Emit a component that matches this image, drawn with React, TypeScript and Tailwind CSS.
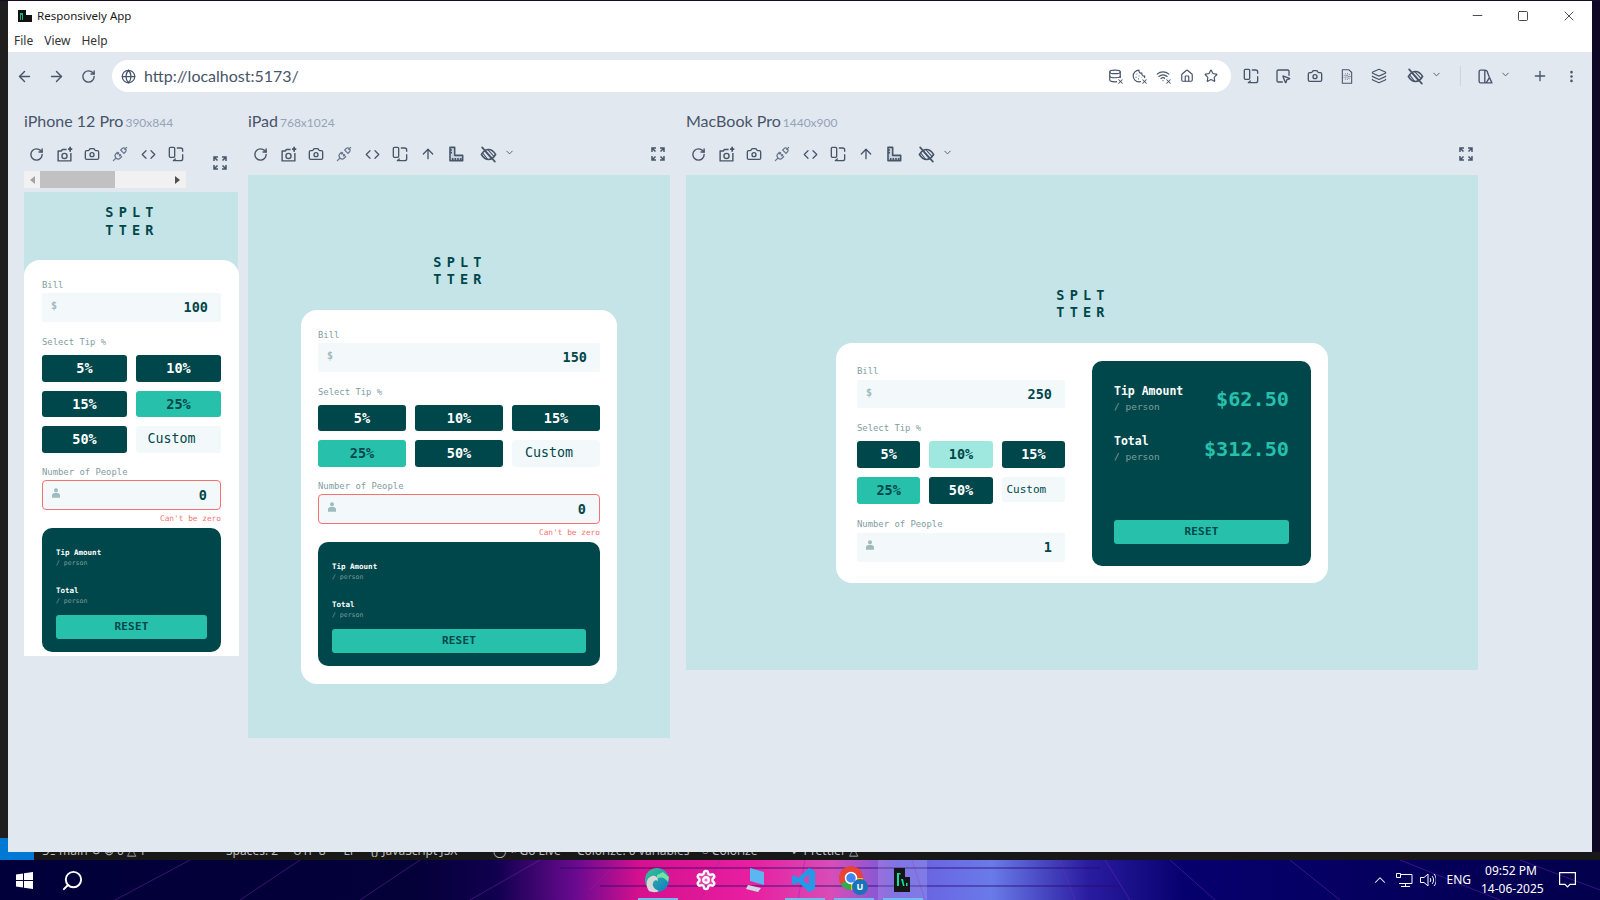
import { ArrowLeft, ArrowRight, RotateCw, Globe, Camera, Code, ArrowUp, House, Star, Plus, EllipsisVertical, ChevronDown, Layers, SquareMousePointer, Cookie, Wifi, Database, Search, Settings, Minus, Square, X, ChevronUp } from "lucide-react";
import type { ReactNode } from "react";

const mono = "font-['DejaVu_Sans_Mono',monospace]";

function XMark() {
  return (
    <span className="absolute -bottom-0.5 -right-0.5 bg-white leading-none">
      <X size={7} strokeWidth={3.5} color="#475569" />
    </span>
  );
}

function PhoneRotate({ size = 16 }: { size?: number }) {
  return (
    <svg width={size} height={size} viewBox="0 0 24 24" fill="none" stroke="#475569" strokeWidth="2" strokeLinecap="round" strokeLinejoin="round">
      <rect x="2" y="2" width="8" height="15" rx="1.5" />
      <path d="M14 3h5a3 3 0 0 1 3 3v2M22 13v6a3 3 0 0 1-3 3H8M11 19.5 8 22" />
    </svg>
  );
}

function CameraPlus() {
  return (
    <svg width="17" height="17" viewBox="0 0 24 24" fill="none" stroke="#475569" strokeWidth="2" strokeLinejoin="round">
      <path d="M15 5H9L7.5 7H3v14h18V10" />
      <circle cx="12" cy="14" r="3.6" />
      <path d="M20 1v7M17 4.5h6" strokeWidth="2.4" />
    </svg>
  );
}

function Plug() {
  return (
    <svg width="16" height="16" viewBox="0 0 24 24" fill="none" stroke="#64748b" strokeWidth="1.7" strokeLinecap="round">
      <path d="m2 22 4-4M22 2l-3 3M8 9.500l6.500 6.500-2 2a4.500 4.500 0 0 1-6.500-6.500zM13 6l5 5 2-2a3.500 3.500 0 0 0-5-5zM8 12l2-2M11 15l2-2" />
    </svg>
  );
}

function RulerL() {
  return (
    <svg width="16" height="16" viewBox="0 0 24 24" fill="#cbd5e1" stroke="#475569" strokeWidth="2.400" strokeLinejoin="round">
      <path d="M3 2h7v12h12v8H3zM7 18v4M11 18v4M15 18v4M19 18v4M3 6h3M3 10h3" />
    </svg>
  );
}

function EyeHatch({ size = 18 }: { size?: number }) {
  return (
    <svg width={size} height={size} viewBox="0 0 24 24" fill="none" stroke="#475569" strokeWidth="2.200" strokeLinecap="round">
      <path d="M2 12c3-5 6.500-7 10-7s7 2 10 7c-3 5-6.500 7-10 7s-7-2-10-7z" />
      <path d="m7 7 9 11M4 10l7 9M11 5l9 10" strokeWidth="1.500" />
      <path d="M3 2l18 20" strokeWidth="2.400" />
    </svg>
  );
}

function Expand() {
  return (
    <svg width="14" height="14" viewBox="0 0 14 14" fill="none" stroke="#475569" strokeWidth="1.500">
      <path d="M1 5V1h4M1 1l3.500 3.500M13 5V1H9M13 1 9.500 4.500M1 9v4h4M1 13l3.500-3.500M13 9v4H9M13 13 9.500 9.500" />
    </svg>
  );
}

function PanelIcon() {
  return (
    <svg width="17" height="17" viewBox="0 0 24 24" fill="none" stroke="#475569" strokeWidth="1.900" strokeLinejoin="round">
      <path d="M11 3H5a2 2 0 0 0-2 2v14a2 2 0 0 0 2 2h16l-4-9-3-8zM11 3v18M13 21l5-8" />
    </svg>
  );
}

function FileDots() {
  return (
    <svg width="16" height="17" viewBox="0 0 24 24" fill="none" stroke="#475569" strokeWidth="1.600" strokeLinejoin="round">
      <path d="M5 2h10l4 4v16H5z" />
      <circle cx="12" cy="12" r="2" strokeDasharray="1 1.200" />
      <circle cx="12" cy="12" r="4.500" strokeDasharray="1 2" />
    </svg>
  );
}

function PersonIcon() {
  return (
    <svg width="8" height="10" viewBox="0 0 12 14" fill="#9ebbbd">
      <circle cx="6" cy="3" r="3" />
      <path d="M0 14v-3.500C0 8 2 6.500 6 6.500s6 1.500 6 4V14z" />
    </svg>
  );
}

function ToolBtn({ children, w = "w-7" }: { children: ReactNode; w?: string }) {
  return <div className={`flex h-[18px] shrink-0 items-center justify-center ${w}`}>{children}</div>;
}

function DeviceToolbar({ full }: { full: boolean }) {
  return (
    <div className="-ml-[2px] flex items-center">
      <ToolBtn><RotateCw size={15} color="#475569" strokeWidth={2.200} /></ToolBtn>
      <ToolBtn><CameraPlus /></ToolBtn>
      <ToolBtn><Camera size={16} color="#475569" strokeWidth={2} /></ToolBtn>
      <ToolBtn><Plug /></ToolBtn>
      <ToolBtn><Code size={15} color="#475569" strokeWidth={2} /></ToolBtn>
      <ToolBtn><PhoneRotate /></ToolBtn>
      {full && <ToolBtn><ArrowUp size={16} color="#475569" strokeWidth={2} /></ToolBtn>}
      {full && <ToolBtn><RulerL /></ToolBtn>}
      {full && (
        <div className="ml-[10px] flex items-center gap-[7px]">
          <EyeHatch size={17} />
          <ChevronDown size={11} color="#475569" strokeWidth={2} className="-mt-1" />
        </div>
      )}
    </div>
  );
}

function Title({ className }: { className: string }) {
  return (
    <div className={`${mono} text-center text-[13.500px] font-bold leading-[17.500px] tracking-[5.200px] text-[#00474b] ${className}`}>
      <div>SPLT</div>
      <div>TTER</div>
    </div>
  );
}

function Field({ value, error, h, person }: { value: string; error?: boolean; h: string; person?: boolean }) {
  return (
    <div className={`flex items-start justify-between rounded-[2px] bg-[#f3f9fa] pl-[9px] pr-[13px] ${h} ${error ? "rounded-[4px] border border-[#f87171]" : ""}`}>
      <div className={`pt-[7px] text-[10px] font-bold leading-[12px] text-[#9ebbbd] ${mono}`}>{person ? <PersonIcon /> : "$"}</div>
      <div className={`self-center text-[13.500px] font-bold text-[#00474b] ${mono}`}>{value}</div>
    </div>
  );
}

function Label({ children, className = "" }: { children: ReactNode; className?: string }) {
  return <div className={`${mono} h-3 text-[8.900px] leading-3 text-[#7f9d9f] ${className}`}>{children}</div>;
}

function TipBtn({ label, kind = "dark" }: { label: string; kind?: "dark" | "active" | "hover" }) {
  const tone = kind === "active" ? "bg-[#26c0ab] text-[#00474b]" : kind === "hover" ? "bg-[#9fe8df] text-[#00474b]" : "bg-[#00474b] text-white";
  return <div className={`flex h-[26.500px] items-center justify-center rounded-[3px] text-[13.500px] font-bold ${mono} ${tone}`}>{label}</div>;
}

function CustomBox({ small }: { small?: boolean }) {
  return (
    <div className={`flex items-center justify-center rounded-[3px] bg-[#f3f9fa] pr-[14px] text-[#00474b] ${mono} ${small ? "h-[25px] text-[11px]" : "h-[26.500px] text-[13.300px]"}`}>
      Custom
    </div>
  );
}

function Reset() {
  return (
    <div className={`flex h-6 items-center justify-center rounded-[3px] bg-[#26c0ab] text-[11px] font-bold tracking-[0.200px] text-[#00474b] ${mono}`}>
      RESET
    </div>
  );
}

function SmallResult() {
  return (
    <div className="mt-[3px] h-[124px] rounded-[10px] bg-[#00474b] px-[14px] pt-[19.500px]">
      <div className={`${mono} text-[7.500px] font-bold leading-[10px] text-white`}>Tip Amount</div>
      <div className={`${mono} mt-[1px] text-[6.500px] leading-[9px] text-[#7f9d9f]`}>/ person</div>
      <div className={`${mono} mt-[18.500px] text-[7.500px] font-bold leading-[10px] text-white`}>Total</div>
      <div className={`${mono} mt-[1px] text-[6.500px] leading-[9px] text-[#7f9d9f]`}>/ person</div>
      <div className="mt-[9px]"><Reset /></div>
    </div>
  );
}

function PeopleError({ value }: { value: string }) {
  return (
    <>
      <Label className="mt-[13.500px] mb-[2px]">Number of People</Label>
      <Field value={value} error person h="h-[30px]" />
      <div className={`${mono} mt-[3px] h-3 text-right text-[7.800px] leading-3 text-[#f87171]`}>Can't be zero</div>
    </>
  );
}

function PhoneBody() {
  return (
    <div className="flex h-[464px] w-[214px] flex-col bg-[#c5e4e7]">
      <div className="h-[68px] pt-[12px]"><Title className="pl-[2px]" /></div>
      <div className="-mr-px flex-1 rounded-t-[16px] bg-white pl-[18px] pr-[18px] pt-[19px]">
        <Label className="mb-[2px]">Bill</Label>
        <Field value="100" h="h-[29px]" />
        <Label className="mt-[14px] mb-[7px]">Select Tip %</Label>
        <div className="grid grid-cols-2 gap-x-[9px] gap-y-[9px]">
          <TipBtn label="5%" />
          <TipBtn label="10%" />
          <TipBtn label="15%" />
          <TipBtn label="25%" kind="active" />
          <TipBtn label="50%" />
          <CustomBox />
        </div>
        <PeopleError value="0" />
        <SmallResult />
      </div>
    </div>
  );
}

function TabletBody() {
  return (
    <div className="flex h-[563px] w-[422px] flex-col items-center justify-center bg-[#c5e4e7] pt-[24px]">
      <Title className="mb-[21px] pl-[2px]" />
      <div className="h-[374px] w-[316px] rounded-[16px] bg-white px-[17px] pt-[19px]">
        <Label className="mb-[2px]">Bill</Label>
        <Field value="150" h="h-[29px]" />
        <Label className="mt-[14px] mb-[7px]">Select Tip %</Label>
        <div className="grid grid-cols-3 gap-x-[9px] gap-y-[9px]">
          <TipBtn label="5%" />
          <TipBtn label="10%" />
          <TipBtn label="15%" />
          <TipBtn label="25%" kind="active" />
          <TipBtn label="50%" />
          <CustomBox />
        </div>
        <PeopleError value="0" />
        <SmallResult />
      </div>
    </div>
  );
}

function DesktopBody() {
  return (
    <div className="flex h-[495px] w-[792px] flex-col items-center justify-center bg-[#c5e4e7] pt-[24px]">
      <Title className="mb-[21px] pl-[2px]" />
      <div className="flex h-[240px] w-[492px] items-center justify-between rounded-[16px] bg-white pl-[21px] pr-[17px] pt-[2px]">
        <div className="w-[208px]">
          <Label className="mb-[3px]">Bill</Label>
          <Field value="250" h="h-[28px]" />
          <Label className="mt-[14px] mb-[7px]">Select Tip %</Label>
          <div className="grid grid-cols-3 items-start gap-x-[9px] gap-y-[9.500px]">
            <TipBtn label="5%" />
            <TipBtn label="10%" kind="hover" />
            <TipBtn label="15%" />
            <TipBtn label="25%" kind="active" />
            <TipBtn label="50%" />
            <CustomBox small />
          </div>
          <Label className="mt-[14px] mb-[3px]">Number of People</Label>
          <Field value="1" person h="h-[29px]" />
        </div>
        <div className="flex h-[205px] w-[219px] flex-col rounded-[10px] bg-[#00474b] px-[22px] pb-[22px] pt-[20px]">
          <Amount title="Tip Amount" value="$62.50" />
          <div className="mt-[14px]"><Amount title="Total" value="$312.50" /></div>
          <div className="mt-auto"><Reset /></div>
        </div>
      </div>
    </div>
  );
}

function Amount({ title, value }: { title: string; value: string }) {
  return (
    <div className="flex h-[36px] items-center justify-between">
      <div>
        <div className={`${mono} text-[11.500px] font-bold leading-[16px] text-white`}>{title}</div>
        <div className={`${mono} text-[9.500px] leading-[16px] text-[#7f9d9f]`}>/ person</div>
      </div>
      <div className={`${mono} text-[20.200px] font-bold text-[#26c0ab]`}>{value}</div>
    </div>
  );
}

function DeviceHead({ name, dims }: { name: string; dims: string }) {
  return (
    <div className="flex h-[18px] items-baseline gap-[2px] font-['Lato',sans-serif] leading-[18px]">
      <span className="text-[16px] text-[#475569]">{name}</span>
      <span className="text-[12px] text-[#94a3b8]">{dims}</span>
    </div>
  );
}

function Preview() {
  return (
    <div className="flex min-h-0 flex-1 gap-[10px] pl-4 pt-[12px]">
      <div className="w-[214px] shrink-0">
        <DeviceHead name="iPhone 12 Pro" dims="390x844" />
        <div className="mt-[15px] flex items-start">
          <DeviceToolbar full={false} />
          <div className="ml-[23px] mt-[11px]"><Expand /></div>
        </div>
        <div className="mt-px flex h-[17px] w-[162px] items-center justify-between bg-[#f1f1f1] px-[6px]">
          <span className="h-0 w-0 border-y-[4px] border-r-[5px] border-y-transparent border-r-[#a3a3a3]" />
          <span className="ml-[5px] mr-auto h-[17px] w-[75px] bg-[#c1c1c1]" />
          <span className="h-0 w-0 border-y-[4px] border-l-[5px] border-y-transparent border-l-[#505050]" />
        </div>
        <div className="mt-[4px]"><PhoneBody /></div>
      </div>
      <div className="w-[422px] shrink-0">
        <DeviceHead name="iPad" dims="768x1024" />
        <div className="mt-[15px] flex items-center justify-between pr-[5px]">
          <DeviceToolbar full />
          <Expand />
        </div>
        <div className="mt-[12px]"><TabletBody /></div>
      </div>
      <div className="ml-[6px] w-[792px] shrink-0">
        <DeviceHead name="MacBook Pro" dims="1440x900" />
        <div className="mt-[15px] flex items-center justify-between pr-[5px]">
          <DeviceToolbar full />
          <Expand />
        </div>
        <div className="mt-[12px]"><DesktopBody /></div>
      </div>
    </div>
  );
}

function AddressBar() {
  const s = "#475569";
  return (
    <div className="flex h-[48px] shrink-0 items-center">
      <ToolBtn w="w-8"><ArrowLeft size={17} color={s} strokeWidth={2} /></ToolBtn>
      <ToolBtn w="w-8"><ArrowRight size={17} color={s} strokeWidth={2} /></ToolBtn>
      <ToolBtn w="w-8"><RotateCw size={15} color={s} strokeWidth={2.200} /></ToolBtn>
      <div className="ml-2 flex h-8 w-[1119px] items-center rounded-full bg-white pl-[9px] pr-[13px]">
        <Globe size={15} color={s} strokeWidth={2} />
        <span className="ml-[8px] font-['Lato',sans-serif] text-[16px] text-[#475569]">http://localhost:5173/</span>
        <div className="ml-auto flex items-center gap-[10px]">
          <div className="relative"><Database size={14} color={s} strokeWidth={2} /><XMark /></div>
          <div className="relative"><Cookie size={14} color={s} strokeWidth={2} /><XMark /></div>
          <div className="relative"><Wifi size={14} color={s} strokeWidth={2} /><XMark /></div>
          <House size={14} color={s} strokeWidth={2} />
          <Star size={14} color={s} strokeWidth={2} />
        </div>
      </div>
      <div className="ml-[4px] flex items-center">
        <ToolBtn w="w-8"><PhoneRotate /></ToolBtn>
        <ToolBtn w="w-8"><SquareMousePointer size={16} color={s} strokeWidth={2} /></ToolBtn>
        <ToolBtn w="w-8"><Camera size={16} color={s} strokeWidth={2} /></ToolBtn>
        <ToolBtn w="w-8"><FileDots /></ToolBtn>
        <ToolBtn w="w-8"><Layers size={16} color={s} strokeWidth={1.800} /></ToolBtn>
      </div>
      <div className="ml-[12px] flex items-center gap-[7px]">
        <EyeHatch size={17} />
        <ChevronDown size={11} color={s} strokeWidth={2} className="-mt-1" />
      </div>
      <div className="ml-[18px] h-[20px] w-px bg-[#cbd5e1]" />
      <div className="ml-[16px] flex items-center gap-[6px]">
        <PanelIcon />
        <ChevronDown size={11} color={s} strokeWidth={2} className="-mt-1" />
      </div>
      <div className="ml-[21px]"><Plus size={16} color={s} strokeWidth={2} /></div>
      <div className="ml-[16px]"><EllipsisVertical size={15} color={s} strokeWidth={2.200} /></div>
    </div>
  );
}

function AppWindow() {
  return (
    <div className="flex min-w-0 flex-1 flex-col">
      <div className="flex h-[51px] shrink-0 flex-col bg-white font-['Noto_Sans',sans-serif] text-[12px] text-[#1a1a1a]">
        <div className="flex h-[29px] items-center">
          <svg width="14" height="12" viewBox="0 0 14 12" className="ml-[10px]">
            <path d="M0 0h8v12H0zM8 5h6v7H8z" fill="#111" />
            <path d="M2 3h3v7H4V5H3v5H2z" fill="#10b981" />
          </svg>
          <span className="ml-[5px] text-[11.500px]">Responsively App</span>
          <div className="ml-auto flex items-center">
            <div className="flex w-[46px] justify-center"><Minus size={15} color="#111" strokeWidth={1.200} /></div>
            <div className="flex w-[46px] justify-center"><Square size={12} color="#111" strokeWidth={1.500} /></div>
            <div className="flex w-[46px] justify-center"><X size={16} color="#111" strokeWidth={1.100} /></div>
          </div>
        </div>
        <div className="flex h-[22px] items-center gap-[11px] pl-[6px] text-[#333]">
          <span>File</span>
          <span>View</span>
          <span>Help</span>
        </div>
      </div>
      <div className="flex min-h-0 flex-1 flex-col bg-[#e2e8f0]">
        <AddressBar />
        <Preview />
      </div>
    </div>
  );
}

function StatusStrip() {
  return (
    <div className="flex h-2 shrink-0 overflow-hidden bg-[#181818] pr-[723px]">
      <div className="h-full w-[34px] bg-[#0078d4]" />
      <div className="-mt-[10px] flex h-[18px] items-center font-['Noto_Sans',sans-serif] text-[12px] leading-[18px] text-[#bbbbbb]">
        <span className="ml-[8px]">⎇ main ↻ ⊗ 0 △ 1</span>
        <span className="ml-[80px]">Spaces: 2</span>
        <span className="ml-[15px]">UTF-8</span>
        <span className="ml-[18px]">LF</span>
        <span className="ml-[14px]">{"{}"} JavaScript JSX</span>
        <span className="ml-[36px]">◯ ⌁ Go Live</span>
        <span className="ml-[16px]">Colorize: 0 variables</span>
        <span className="ml-[12px]">○ Colorize</span>
        <span className="ml-[33px]">✓ Prettier</span>
        <span className="ml-[3px]">△</span>
      </div>
    </div>
  );
}

function Wallpaper() {
  return (
    <svg className="absolute inset-0" width="1600" height="40" viewBox="0 0 1600 40" fill="none">
      <path d="M115 40 190 0M240 40 300 0M360 40 420 0M470 40 540 0M590 30 620 0M700 40 720 0M798 40 805 0M925 40 912 0M1075 40 1060 0M1130 40 1105 0M1215 40 1170 0M1340 40 1290 0M1500 40 1400 0M1600 30 1520 0" stroke="#7c2bb8" strokeOpacity="0.450" />
      <path d="M560 8h540M600 26h520" stroke="#2a0a6e" strokeOpacity="0.550" strokeWidth="1.500" />
    </svg>
  );
}

function EdgeIcon() {
  return (
    <svg width="26" height="26" viewBox="0 0 26 26">
      <defs>
        <linearGradient id="edgeA" x1="0" y1="0" x2="1" y2="1">
          <stop offset="0" stopColor="#36c78d" />
          <stop offset="1" stopColor="#1279c9" />
        </linearGradient>
      </defs>
      <circle cx="13" cy="13" r="12" fill="url(#edgeA)" />
      <path d="M5 24c-4-6-3-13 3-15 4-1 6 2 6 5-3-2-6 1-5 5 1 3 4 4 6 5-4 2-7 1-10 0z" fill="#d8d8d8" />
      <path d="M13 12c4-3 8-1 11 3l1-5-6-5-6 3z" fill="#6fe3a6" />
    </svg>
  );
}

function ChromeIcon() {
  return (
    <div className="relative h-[30px] w-[30px]">
      <svg width="26" height="26" viewBox="0 0 26 26">
        <circle cx="13" cy="13" r="12" fill="#e84335" />
        <path d="M13 13 2.600 19A12 12 0 0 0 13 25l6-3z" fill="#34a853" />
        <path d="M13 13 25 13a12 12 0 0 1-12 12z" fill="#fbbc05" />
        <circle cx="13" cy="13" r="5.500" fill="#4285f4" stroke="#fff" strokeWidth="1.500" />
      </svg>
      <span className="absolute bottom-0 right-0 flex h-[16px] w-[16px] items-center justify-center rounded-full bg-[#1a73b8] text-[9px] font-bold text-white">U</span>
    </div>
  );
}

function Taskbar() {
  return (
    <div className="relative flex h-10 shrink-0 items-center bg-[linear-gradient(90deg,#02003a_0%,#040038_26%,#10004e_31%,#6a0a90_36%,#d6108f_40%,#e81fa0_47%,#d84db8_52%,#6a5ce0_56%,#6a7ae8_62%,#2a1ca0_68%,#06006e_74%,#03004c_100%)] font-['Noto_Sans',sans-serif] text-white">
      <Wallpaper />
      <div className="relative flex h-full w-12 items-center justify-center">
        <svg width="17" height="17" viewBox="0 0 17 17" fill="#fff">
          <path d="M0 2.400 7 1.400v6.600H0zM8 1.200 17 0v8H8zM0 9h7v6.600L0 14.600zM8 9h9v8l-9-1.200z" />
        </svg>
      </div>
      <div className="relative flex h-full w-12 items-center justify-center">
        <Search size={23} color="#fff" strokeWidth={2} className="-scale-x-100" />
      </div>
      <div className="relative ml-[536.500px] flex h-full">
        <TaskItem on><EdgeIcon /></TaskItem>
        <TaskItem><Settings size={22} color="#fff" fill="#fff" fillOpacity={0.200} strokeWidth={2.600} /></TaskItem>
        <TaskItem>
          <svg width="22" height="26" viewBox="0 0 22 26">
            <path d="M6 1 20 5v13L6 14z" fill="#5bb7f2" />
            <path d="M4 18l13 3-3 4-12-3z" fill="#cfd8e3" />
          </svg>
        </TaskItem>
        <TaskItem on>
          <svg width="24" height="26" viewBox="0 0 24 26" fill="#1f9be8">
            <path d="M17 1 23 4v18l-6 3L6 15l-4 3-2-1.500V9.500L2 8l4 3zM17 7l-6 6 6 5z" fillRule="evenodd" />
          </svg>
        </TaskItem>
        <TaskItem on><ChromeIcon /></TaskItem>
        <TaskItem on active>
          <svg width="16" height="24" viewBox="0 0 16 24">
            <path d="M0 0h11v9h5v15H0z" fill="#161616" />
            <path d="M3 5h3.500v1.500H5V18H3zM7 11h2l1.500 7H9zM12 15h1.500v3H12z" fill="#10e0a0" />
          </svg>
        </TaskItem>
      </div>
      <div className="relative ml-auto flex h-full items-center pr-[24px]">
        <ChevronUp size={18} color="#fff" strokeWidth={1.400} />
        <svg width="17" height="15" viewBox="0 0 17 15" fill="none" stroke="#fff" className="ml-[7px]">
          <path d="M4.500 1.500H16v9H3M9.500 10.500v3M5 13.500h9M.5.500h4v4h-4z" />
        </svg>
        <svg width="16" height="14" viewBox="0 0 16 14" fill="none" stroke="#fff" className="ml-[7px]">
          <path d="M.5 4.500H4L8 1v12L4 9.500H.5zM10 5c1 1 1 3 0 4M12 3c2 2 2 6 0 8M14 1c3 3 3 9 0 12" />
        </svg>
        <span className="ml-[10px] text-[12px]">ENG</span>
        <div className="ml-[10px] w-[60px] text-center text-[12px] leading-[18px]">
          <div>09:52 PM</div>
          <div className="whitespace-nowrap">14-06-2025</div>
        </div>
        <svg width="17" height="16" viewBox="0 0 17 16" fill="none" stroke="#fff" strokeWidth="1.200" className="ml-[18px]">
          <path d="M.6.600h15.800v11.800H11l-2.500 2.500L6 12.400H.6z" />
        </svg>
      </div>
    </div>
  );
}

function TaskItem({ children, on, active }: { children: ReactNode; on?: boolean; active?: boolean }) {
  return (
    <div className={`relative flex h-full w-[49px] items-center justify-center ${active ? "bg-white/15" : ""}`}>
      {children}
      {on && <span className="absolute bottom-0 left-[5px] right-[4px] h-[2px] bg-[#76b9ed]" />}
    </div>
  );
}

export default function App() {
  return (
    <div className="flex h-[900px] w-[1600px] flex-col overflow-hidden bg-[#181818]">
      <div className="h-px shrink-0 bg-[#1a0a2a]" />
      <div className="flex min-h-0 flex-1">
        <div className="flex w-2 shrink-0 flex-col bg-[#1f1f1f]">
          <div className="mt-auto h-[14px] bg-[#0078d4]" />
        </div>
        <AppWindow />
        <div className="w-2 shrink-0 bg-[#0e0726]" />
      </div>
      <StatusStrip />
      <Taskbar />
    </div>
  );
}
